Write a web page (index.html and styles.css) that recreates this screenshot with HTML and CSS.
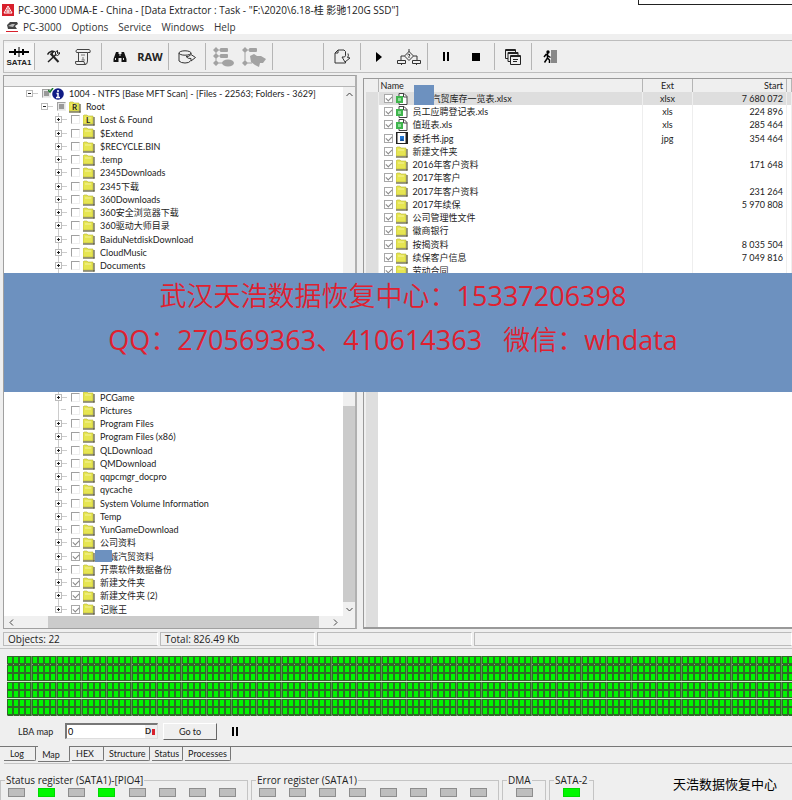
FILE: index.html
```
<!DOCTYPE html>
<html lang="zh-CN">

<head>
    <meta charset="UTF-8">
    <meta name="viewport" content="width=device-width, initial-scale=1.0">
    <title>PC-3000 UDMA-E</title>
    <link rel="stylesheet" href="styles.css">
</head>

<body>
    <!-- 公用图标 -->
    <svg class="defs" width="0" height="0">
        <symbol id="folder" viewBox="0 0 12 12">
            <path d="M0 10V2L1 1H4L5 2H10V10Z" fill="#e6e552" stroke="#b5b23a" stroke-width=".6" />
            <path d="M0 11H11.500M11 3V11.500" fill="none" stroke="#3c3b14" />
            <path d="M2 4H8" stroke="#f4f3a0" />
        </symbol>
        <symbol id="xls" viewBox="0 0 12 12">
            <path d="M3 .5H8L11 3.500V11.500H3Z" fill="#fff" stroke="#444" />
            <path d="M7.500 .5V4H11" fill="none" stroke="#444" />
            <rect x="0" y="3" width="7" height="7" fill="#3fb54d" />
            <path d="M2 5H5V8H2Z" fill="#8fdc98" />
        </symbol>
        <symbol id="jpg" viewBox="0 0 12 12">
            <path d="M0 0H3V12H0ZM9 0H12V12H9Z" fill="#222" />
            <rect x="1" y=".5" width="9" height="11" fill="#fff" stroke="#222" />
            <rect x="4" y="4" width="4" height="5" fill="#2276d2" />
            <path d="M4 9L6 6.500L8 9Z" fill="#104a94" />
        </symbol>
    </svg>

    <header class="titlebar">
        <svg width="12" height="12" viewBox="0 0 12 12">
            <rect width="12" height="12" fill="#d8202c" />
            <path d="M6 2L2 9H10Z M6 4V9 M4 7H8" fill="none" stroke="#fff" />
        </svg>
        <h1>PC-3000 UDMA-E - China - [Data Extractor : Task - "F:\2020\6.18-桂 影驰120G SSD"]</h1>
        <div class="corner"></div>
    </header>
    <nav class="menubar">
        <svg width="13" height="12" viewBox="0 0 13 12">
            <path d="M1 4L4 1H11L12 3L9 5L11 8H2Z" fill="#444" />
            <path d="M2 5L6 3H9L7 6Z" fill="#bbb" />
            <path d="M0 10.500H12" stroke="#d8202c" />
        </svg>
        <a href="#">PC-3000</a>
        <a href="#">Options</a>
        <a href="#">Service</a>
        <a href="#">Windows</a>
        <a href="#">Help</a>
    </nav>

    <div class="toolbar">
        <div class="group first">
            <button class="sata" title="SATA1">
                <svg width="22" height="10" viewBox="0 0 22 10">
                    <path d="M1 5H21" stroke="#000" stroke-width="2" />
                    <path d="M7 2V8M15 2V8" stroke="#000" stroke-width="2" />
                    <path d="M11 0V10" stroke="#000" />
                </svg>
                SATA1
            </button>
        </div>
        <div class="group">
            <button title="Utility">
                <svg width="13" height="13" viewBox="0 0 13 13" fill="none" stroke="#222">
                    <path d="M3.500 3.500L11.500 12" stroke-width="2" />
                    <path d="M.5 4.500L2 2.500L5 1L7 1.500L5 3L5.500 5M9 4.500L1 12" stroke-width="1.500" />
                    <path d="M10.500 .5L8.500 2V4.500L10.500 5.500L12.500 4V2.500L10.500 3.500Z" />
                </svg>
            </button>
            <button title="Log">
                <svg width="18" height="18" viewBox="0 0 18 18" fill="none" stroke="#444">
                    <path d="M3 1.500H15Q17 2 16 4.500H13.500V13Q13.500 16.500 11 16.500H3Q1 16.500 1.500 13.500H10Q10 16.500 12 16.500M4.500 13V4.500H2.500Q1 3 3 1.500M3 4.500H13.500" />
                    <path d="M7 7H11M9 9V12M7.500 12H11" stroke="#777" />
                </svg>
            </button>
        </div>
        <div class="group">
            <button title="Find">
                <svg width="14" height="12" viewBox="0 0 14 12">
                    <path d="M3 1H5.500V3H8.500V1H11L13.500 8V11H8.500V7H5.500V11H.5V8Z" fill="#111" />
                    <path d="M2.500 7V9M10.500 7V9M7 3V5" stroke="#ddd" />
                </svg>
            </button>
            <button class="raw">RAW</button>
        </div>
        <div class="group">
            <button title="Disk">
                <svg width="18" height="14" viewBox="0 0 18 14" fill="none" stroke="#333">
                    <ellipse cx="7" cy="3" rx="6" ry="2.200" />
                    <path d="M1 3V11Q3 13 7 13Q11 13 12.500 11M13 3V4" />
                    <path d="M8 6.500Q11 7 13 4.500L17.500 7.500L13 11V8.500Q10 9 8 6.500Z" fill="#efefef" />
                </svg>
            </button>
        </div>
        <div class="group">
            <button title="Map" disabled>
                <svg width="22" height="20" viewBox="0 0 22 20" fill="#a2a2a2">
                    <path d="M3 0L6 3L3 6L0 3ZM3 6L6 9L3 12L0 9ZM3 13L6 16L3 19L0 16ZM2.500 3H3.500V17H2.500ZM3 2.500H8V3.500H3ZM3 8.500H8V9.500H3ZM3 15.500H10V16.500H3Z" />
                    <rect x="7" y="1" width="8" height="4" rx="1" />
                    <rect x="7" y="7" width="8" height="4" rx="1" />
                    <ellipse cx="15" cy="16" rx="6" ry="3.500" />
                </svg>
            </button>
            <button title="Map range" disabled>
                <svg width="24" height="20" viewBox="0 0 24 20" fill="#a2a2a2">
                    <path d="M3 0L6 3L3 6L0 3ZM3 13L6 16L3 19L0 16ZM2.500 3H3.500V17H2.500ZM3 2.500H8V3.500H3ZM3 15.500H10V16.500H3Z" />
                    <rect x="7" y="1" width="8" height="4" rx="1" />
                    <path d="M8 9L12 7L15 9L19 9L24 12L21 16H18L17 20L13 18L9 15Z" />
                </svg>
            </button>
        </div>
        <div class="group blank"></div>
        <div class="group">
            <button title="Save">
                <svg width="17" height="15" viewBox="0 0 17 15" fill="none" stroke="#333">
                    <path d="M11.500 5V2.500L10 1H4L1 4V14H11.500V12M1 4H4V1" />
                    <path d="M14 4.500Q15 7 13.500 8.500L16 9L11 13L8 8H10.500Q12 7 11.500 5" fill="#efefef" />
                </svg>
            </button>
        </div>
        <div class="group">
            <button title="Start">
                <svg width="6" height="10" viewBox="0 0 6 10"><path d="M0 0L6 5L0 10Z" /></svg>
            </button>
            <button title="Conditions">
                <svg width="24" height="16" viewBox="0 0 24 16" fill="none" stroke="#333">
                    <path d="M12 0V3M12 2.500L16.500 7L12 11.500L7.500 7ZM7.500 7H4V11M16.500 7H20V11M.5 11.500H8.500V14.500H.5ZM15.500 11.500H23.500V14.500H15.500ZM4.500 14V16M19.500 14V16" />
                    <path d="M10.500 6Q12 4 13 6L12 7.500V9" />
                </svg>
            </button>
        </div>
        <div class="group">
            <button title="Pause"><svg width="6" height="9" viewBox="0 0 6 9"><path d="M0 0H2V9H0ZM4 0H6V9H4Z" /></svg></button>
            <button title="Stop"><svg width="8" height="8" viewBox="0 0 8 8"><path d="M0 0H8V8H0Z" /></svg></button>
        </div>
        <div class="group">
            <button title="Windows">
                <svg width="16" height="16" viewBox="0 0 16 16" fill="#eee" stroke="#222">
                    <path d="M.5 .5H10.500V9.500H.5ZM.5 1.500H10.500" />
                    <path d="M3 3.500H13V12.500H3ZM3 4.500H13" />
                    <path d="M5.500 6.500H15.500V15.500H5.500ZM5.500 7.500H15.500M8 10.500H13M8 12.500H12" />
                </svg>
            </button>
        </div>
        <div class="group last">
            <button title="Exit">
                <svg width="15" height="14" viewBox="0 0 15 14">
                    <path d="M10 0H14V13H10Z" fill="#888" />
                    <path d="M9 0V13" stroke="#222" />
                    <circle cx="5" cy="2" r="1.700" />
                    <path d="M4.500 3V8L1.500 12.500M4.500 8L6.500 10V13M1 7L3 4.500L7.500 7.500" fill="none" stroke="#000" stroke-width="1.500" />
                </svg>
            </button>
        </div>
    </div>

    <main class="workspace">
        <section class="left">
            <div class="band"></div>
            <div class="scrollarea">
                <ul class="tree">
                    <li class="lv0"><button class="exp minus"></button><label><input type="checkbox" class="mixed"><svg class="info" width="16" height="12" viewBox="0 0 16 12"><circle cx="10" cy="6" r="5.800" fill="#101c86" /><path d="M10 2V4M8.500 5.500H10V9M8 9.500H12" fill="none" stroke="#fff" stroke-width="1.500" /><path d="M0 2L2 4L5 0" fill="none" stroke="#1c7c2c" stroke-width="1.500" /></svg>1004 - NTFS [Base MFT Scan] - [Files - 22563; Folders - 3629]</label></li>
                    <li class="lv1"><button class="exp minus"></button><label><input type="checkbox" class="mixed"><span class="badge"><svg class="ico"><use href="#folder" /></svg><b>R</b></span>Root</label></li>
                    <li><button class="exp"></button><label><input type="checkbox"><span class="badge"><svg class="ico"><use href="#folder" /></svg><b>L</b></span>Lost &amp; Found</label></li>
                    <li><button class="exp"></button><label><input type="checkbox"><svg class="ico"><use href="#folder" /></svg>$Extend</label></li>
                    <li><button class="exp"></button><label><input type="checkbox"><svg class="ico"><use href="#folder" /></svg>$RECYCLE.BIN</label></li>
                    <li><button class="exp"></button><label><input type="checkbox"><svg class="ico"><use href="#folder" /></svg>.temp</label></li>
                    <li><button class="exp"></button><label><input type="checkbox"><svg class="ico"><use href="#folder" /></svg>2345Downloads</label></li>
                    <li><button class="exp"></button><label><input type="checkbox"><svg class="ico"><use href="#folder" /></svg>2345<span class="cn">下载</span></label></li>
                    <li><button class="exp"></button><label><input type="checkbox"><svg class="ico"><use href="#folder" /></svg>360Downloads</label></li>
                    <li><button class="exp"></button><label><input type="checkbox"><svg class="ico"><use href="#folder" /></svg>360<span class="cn">安全浏览器下载</span></label></li>
                    <li><button class="exp"></button><label><input type="checkbox"><svg class="ico"><use href="#folder" /></svg>360<span class="cn">驱动大师目录</span></label></li>
                    <li><button class="exp"></button><label><input type="checkbox"><svg class="ico"><use href="#folder" /></svg>BaiduNetdiskDownload</label></li>
                    <li><button class="exp"></button><label><input type="checkbox"><svg class="ico"><use href="#folder" /></svg>CloudMusic</label></li>
                    <li><button class="exp"></button><label><input type="checkbox"><svg class="ico"><use href="#folder" /></svg>Documents</label></li>
                    <li class="gap"></li>
                    <li><button class="exp"></button><label><input type="checkbox"><svg class="ico"><use href="#folder" /></svg>PCGame</label></li>
                    <li><span class="noexp"></span><label><input type="checkbox"><svg class="ico"><use href="#folder" /></svg>Pictures</label></li>
                    <li><button class="exp"></button><label><input type="checkbox"><svg class="ico"><use href="#folder" /></svg>Program Files</label></li>
                    <li><button class="exp"></button><label><input type="checkbox"><svg class="ico"><use href="#folder" /></svg>Program Files (x86)</label></li>
                    <li><button class="exp"></button><label><input type="checkbox"><svg class="ico"><use href="#folder" /></svg>QLDownload</label></li>
                    <li><button class="exp"></button><label><input type="checkbox"><svg class="ico"><use href="#folder" /></svg>QMDownload</label></li>
                    <li><button class="exp"></button><label><input type="checkbox"><svg class="ico"><use href="#folder" /></svg>qqpcmgr_docpro</label></li>
                    <li><button class="exp"></button><label><input type="checkbox"><svg class="ico"><use href="#folder" /></svg>qycache</label></li>
                    <li><button class="exp"></button><label><input type="checkbox"><svg class="ico"><use href="#folder" /></svg>System Volume Information</label></li>
                    <li><button class="exp"></button><label><input type="checkbox"><svg class="ico"><use href="#folder" /></svg>Temp</label></li>
                    <li><button class="exp"></button><label><input type="checkbox"><svg class="ico"><use href="#folder" /></svg>YunGameDownload</label></li>
                    <li><button class="exp"></button><label><input type="checkbox" checked><svg class="ico"><use href="#folder" /></svg><span class="cn">公司资料</span></label></li>
                    <li><button class="exp"></button><label><input type="checkbox" checked><svg class="ico"><use href="#folder" /></svg><span class="mask"></span><span class="cn">诚汽贸资料</span></label></li>
                    <li><button class="exp"></button><label><input type="checkbox"><svg class="ico"><use href="#folder" /></svg><span class="cn">开票软件数据备份</span></label></li>
                    <li><button class="exp"></button><label><input type="checkbox" checked><svg class="ico"><use href="#folder" /></svg><span class="cn">新建文件夹</span></label></li>
                    <li><button class="exp"></button><label><input type="checkbox" checked><svg class="ico"><use href="#folder" /></svg><span class="cn">新建文件夹</span>&nbsp;(2)</label></li>
                    <li><button class="exp"></button><label><input type="checkbox" checked><svg class="ico"><use href="#folder" /></svg><span class="cn">记账王</span></label></li>
                </ul>
                <div class="vscroll">
                    <button title="Up"><svg width="7" height="5" viewBox="0 0 7 5"><path d="M.5 4L3.500 1L6.500 4" /></svg></button>
                    <div class="thumb"></div>
                    <button title="Down"><svg width="7" height="5" viewBox="0 0 7 5"><path d="M.5 1L3.500 4L6.500 1" /></svg></button>
                </div>
            </div>
            <div class="hscroll">
                <button title="Left"><svg width="5" height="7" viewBox="0 0 5 7"><path d="M4 .5L1 3.500L4 6.500" /></svg></button>
                <div class="thumb"></div>
                <button title="Right"><svg width="5" height="7" viewBox="0 0 5 7"><path d="M1 .5L4 3.500L1 6.500" /></svg></button>
            </div>
        </section>

        <section class="right">
            <table class="files">
                <colgroup>
                    <col class="c-mark">
                    <col>
                    <col class="c-ext">
                    <col class="c-start">
                    <col class="c-rest">
                </colgroup>
                <thead>
                    <tr><th></th><th class="name">Name</th><th>Ext</th><th class="num">Start</th><th></th></tr>
                </thead>
                <tbody>
                    <tr class="current"><td></td><td><label><input type="checkbox" checked><svg class="ico"><use href="#xls" /></svg><span class="mask"></span><span class="cn">汽贸库存一览表</span>.xlsx</label></td><td>xlsx</td><td>7 680 072</td><td></td></tr>
                    <tr><td></td><td><label><input type="checkbox" checked><svg class="ico"><use href="#xls" /></svg><span class="cn">员工应聘登记表</span>.xls</label></td><td>xls</td><td>224 896</td><td></td></tr>
                    <tr><td></td><td><label><input type="checkbox" checked><svg class="ico"><use href="#xls" /></svg><span class="cn">值班表</span>.xls</label></td><td>xls</td><td>285 464</td><td></td></tr>
                    <tr><td></td><td><label><input type="checkbox" checked><svg class="ico"><use href="#jpg" /></svg><span class="cn">委托书</span>.jpg</label></td><td>jpg</td><td>354 464</td><td></td></tr>
                    <tr><td></td><td><label><input type="checkbox" checked><svg class="ico"><use href="#folder" /></svg><span class="cn">新建文件夹</span></label></td><td></td><td></td><td></td></tr>
                    <tr><td></td><td><label><input type="checkbox" checked><svg class="ico"><use href="#folder" /></svg>2016<span class="cn">年客户资料</span></label></td><td></td><td>171 648</td><td></td></tr>
                    <tr><td></td><td><label><input type="checkbox" checked><svg class="ico"><use href="#folder" /></svg>2017<span class="cn">年客户</span></label></td><td></td><td></td><td></td></tr>
                    <tr><td></td><td><label><input type="checkbox" checked><svg class="ico"><use href="#folder" /></svg>2017<span class="cn">年客户资料</span></label></td><td></td><td>231 264</td><td></td></tr>
                    <tr><td></td><td><label><input type="checkbox" checked><svg class="ico"><use href="#folder" /></svg>2017<span class="cn">年续保</span></label></td><td></td><td>5 970 808</td><td></td></tr>
                    <tr><td></td><td><label><input type="checkbox" checked><svg class="ico"><use href="#folder" /></svg><span class="cn">公司管理性文件</span></label></td><td></td><td></td><td></td></tr>
                    <tr><td></td><td><label><input type="checkbox" checked><svg class="ico"><use href="#folder" /></svg><span class="cn">徽商银行</span></label></td><td></td><td></td><td></td></tr>
                    <tr><td></td><td><label><input type="checkbox" checked><svg class="ico"><use href="#folder" /></svg><span class="cn">按揭资料</span></label></td><td></td><td>8 035 504</td><td></td></tr>
                    <tr><td></td><td><label><input type="checkbox" checked><svg class="ico"><use href="#folder" /></svg><span class="cn">续保客户信息</span></label></td><td></td><td>7 049 816</td><td></td></tr>
                    <tr><td></td><td><label><input type="checkbox" checked><svg class="ico"><use href="#folder" /></svg><span class="cn">劳动合同</span></label></td><td></td><td></td><td></td></tr>
                </tbody>
            </table>
            <div class="empty"></div>
        </section>

        <div class="banner">
            <p><span class="light">武汉天浩数据恢复中心：</span>15337206398</p>
            <p>QQ<span class="light">：</span>270569363<span class="light">、</span>410614363 &nbsp; <span class="light">微信：</span>whdata</p>
        </div>
    </main>

    <div class="statusbar">
        <span>Objects: 22</span>
        <span>Total: 826.49 Kb</span>
        <span></span>
        <span></span>
    </div>

    <section class="mappanel">
        <!-- LBA 扇区图 -->
        <svg class="map" width="100%" height="60">
            <defs>
                <pattern id="cells" width="25" height="17" patternUnits="userSpaceOnUse">
                    <rect width="25" height="17" fill="#2f6a28" />
                    <path d="M1 1H5V7H1ZM7 1H11V7H7ZM13 1H17V7H13ZM19 1H23V7H19ZM1 10H5V16H1ZM7 10H11V16H7ZM13 10H17V16H13ZM19 10H23V16H19Z" fill="#00f400" />
                    <path d="M0 8.500H25" stroke="#8a9a80" stroke-dasharray="1 5" />
                    <path d="M24.500 0V17" stroke="#5f8f58" />
                </pattern>
            </defs>
            <rect width="100%" height="60" fill="url(#cells)" />
            <path d="M0 25.500H2000M0 42.500H2000" stroke="#d5ead2" />
        </svg>
        <div class="lba">
            <label for="lba">LBA map</label>
            <div class="field">
                <input id="lba" type="text" value="0">
                <button title="Dec"><b>D</b><i></i></button>
            </div>
            <button class="goto">Go to</button>
            <button class="pause" title="Pause"><svg width="6" height="9" viewBox="0 0 6 9"><path d="M0 0H2V9H0ZM4 0H6V9H4Z" /></svg></button>
        </div>
    </section>

    <div class="tabs">
        <button>Log</button>
        <button class="active">Map</button>
        <button>HEX</button>
        <button>Structure</button>
        <button>Status</button>
        <button>Processes</button>
    </div>

    <footer class="registers">
        <fieldset class="eight">
            <legend>Status register (SATA1)-[PIO4]</legend>
            <i></i><i class="on"></i><i></i><i class="on"></i><i></i><i></i><i></i><i></i>
        </fieldset>
        <fieldset class="eight">
            <legend>Error register (SATA1)</legend>
            <i></i><i></i><i></i><i></i><i></i><i></i><i></i><i></i>
        </fieldset>
        <fieldset class="one">
            <legend>DMA</legend>
            <i></i>
        </fieldset>
        <fieldset class="one">
            <legend>SATA-2</legend>
            <i class="on"></i>
        </fieldset>
        <p class="sign">天浩数据恢复中心</p>
    </footer>
</body>

</html>
```
FILE: styles.css
```
* {
    box-sizing: border-box;
}

body {
    margin: 0;
    min-height: 100vh;
    overflow: hidden;
    background: #efefef;
    color: #222;
    font: 9px/13px Lato, "Liberation Sans", "Noto Sans CJK SC", sans-serif;
}

button {
    padding: 0;
    border: 0;
    background: none;
    color: inherit;
    font: inherit;
}

.defs {
    position: absolute;
}

/* 标题和菜单 */
.titlebar {
    display: flex;
    align-items: center;
    gap: 4px;
    height: 20px;
    padding-left: 2px;
    background: #fff;
}

.titlebar h1 {
    margin: 0;
    font: 10px/20px "Open Sans", "Noto Sans CJK SC", sans-serif;
    white-space: nowrap;
}

.corner {
    align-self: flex-start;
    width: 154px;
    height: 5px;
    margin-left: auto;
    border-left: 1px solid #222;
    border-bottom: 1px solid #222;
}

.menubar {
    display: flex;
    align-items: center;
    gap: 10px;
    height: 14px;
    padding-left: 6px;
    background: #fff;
    font: 10px/14px "Open Sans", sans-serif;
}

.menubar svg {
    margin-right: -6px;
}

.menubar a {
    color: #333;
    text-decoration: none;
}

/* 工具栏 */
.toolbar {
    display: flex;
    height: 33px;
    margin: 6px 0 0 3px;
    border: solid #bdbdbd;
    border-width: 1px 0 1px 1px;
}

.group {
    display: flex;
    margin: 2px 0;
    padding: 0 3px;
    border-right: 1px solid #b5b5b5;
}

.group button {
    display: flex;
    align-items: center;
    justify-content: center;
    width: 30px;
}

.first {
    padding: 0;
    background: #f6f6f6;
}

.blank {
    width: 51px;
}

.last {
    border: 0;
}

.group .sata {
    flex-direction: column;
    gap: 2px;
    font: bold 8px/8px "Liberation Sans", sans-serif;
}

.group .raw {
    font: bold 11px/14px "Open Sans", sans-serif;
}

/* 中间区域 */
.workspace {
    position: relative;
    display: flex;
    gap: 6px;
    padding: 2px 0 0 3px;
}

.left {
    flex: none;
    width: 354px;
    border: 1px solid #a0a0a0;
    border-right: 2px solid #b0b0b0;
    background: #fff;
}

.band {
    height: 11px;
    background: #efefef;
    border-bottom: 1px solid #b5b5b5;
}

.scrollarea {
    display: flex;
}

.tree {
    flex: 1;
    margin: 0;
    padding: 0;
    list-style: none;
    white-space: nowrap;
    background: linear-gradient(#ccc, #ccc) 54px 26px / 1px 496px no-repeat;
}

.tree li {
    display: flex;
    align-items: center;
    height: 13px;
    padding-left: 51px;
}

.tree li:nth-child(4n) {
    height: 14px;
}

.tree .lv0 {
    padding-left: 22px;
}

.tree .lv1 {
    padding-left: 37px;
}

.tree .gap {
    height: 118px;
}

.tree label,
.files label {
    display: flex;
    align-items: center;
    height: 13px;
}

.exp,
.noexp {
    position: relative;
    width: 7px;
    height: 7px;
    margin-right: 9px;
}

.exp {
    border: 1px solid #bbb;
    background: linear-gradient(#222, #222) center / 3px 1px no-repeat, linear-gradient(#222, #222) center / 1px 3px no-repeat, #fff;
}

.minus {
    background: linear-gradient(#222, #222) center / 3px 1px no-repeat, #fff;
}

.exp::after,
.noexp::after {
    content: "";
    position: absolute;
    top: 2px;
    left: 6px;
    width: 5px;
    border-top: 1px solid #ccc;
}

input[type=checkbox] {
    appearance: none;
    width: 9px;
    height: 9px;
    margin: 0 3px 0 0;
    border: 1px solid #eee;
    border-top-color: #a0a0a0;
    border-left-color: #a0a0a0;
    background: #fff;
}

input[type=checkbox]:checked {
    border-color: #a8a8a8;
}

input[type=checkbox]:checked::after {
    content: "";
    display: block;
    width: 5px;
    height: 3px;
    margin: 1px;
    border: solid #888;
    border-width: 0 0 1px 1px;
    transform: rotate(-45deg);
}

input[type=checkbox].mixed {
    background: #999;
    box-shadow: inset 0 0 0 1px #e4e4e4;
}

.tree .lv0 input {
    margin-right: 0;
}

.ico {
    display: block;
    flex: none;
    width: 12px;
    height: 12px;
    margin-right: 5px;
}

.badge {
    position: relative;
}

.badge b {
    position: absolute;
    top: 0;
    left: 3px;
    font-size: 8px;
    line-height: 13px;
}

.info {
    margin: 0 5px 0 -3px;
}

.cn {
    font-family: "Noto Sans CJK SC", sans-serif;
    font-size: 9px;
}

.mask {
    position: relative;
    z-index: 1;
    width: 17px;
    height: 12px;
    margin: 0 -3px 0 -5px;
    background: #6d91bf;
}

.vscroll {
    display: flex;
    flex-direction: column;
    width: 12px;
    background: #f0f0f0;
}

.vscroll button,
.hscroll button {
    display: flex;
    align-items: center;
    justify-content: center;
    height: 14px;
}

.vscroll path,
.hscroll path {
    fill: none;
    stroke: #444;
}

.vscroll .thumb {
    height: 196px;
    margin-top: auto;
    background: #cbcbcb;
}

.hscroll {
    display: flex;
    align-items: center;
    padding-right: 12px;
    background: #f0f0f0;
}

.hscroll button {
    width: 15px;
    height: 12px;
}

.hscroll .thumb {
    width: 271px;
    height: 12px;
    margin: 0 auto 0 29px;
    background: #cbcbcb;
}

.right {
    display: flex;
    flex: 1;
    flex-direction: column;
    margin-top: 3px;
    padding-left: 2px;
    border: solid #999;
    border-width: 1px 0 2px 1px;
}

.files {
    width: 100%;
    border-collapse: collapse;
    table-layout: fixed;
    background: #fff;
}

.c-mark {
    width: 12px;
}

.c-ext {
    width: 50px;
}

.c-start {
    width: 94px;
}

.c-rest {
    width: 5px;
}

.files th {
    height: 13px;
    padding: 0;
    border-right: 1px solid #b5b5b5;
    background: #efefef;
    font-weight: normal;
}

.files .name {
    padding-left: 2px;
    text-align: left;
}

.files .num {
    padding-right: 3px;
    text-align: right;
}

.files td {
    height: 13px;
    padding: 0;
    border-right: 1px solid #eee;
    text-align: center;
    white-space: nowrap;
}

.files tr:nth-child(4n) td {
    height: 14px;
}

.files td:first-child {
    background: #dedede;
}

.files td:nth-child(2) {
    padding-left: 5px;
}

.files td:nth-child(4) {
    padding-right: 3px;
    text-align: right;
}

.files .current td {
    background: #dedede;
}

.files .mask {
    align-self: flex-end;
    width: 20px;
    height: 20px;
    margin: 0 -2px 0 1px;
}

.empty {
    flex: 1;
    border-left: 12px solid #dedede;
    background: #fff;
}

/* 横幅盖在两栏之上 */
.banner {
    position: absolute;
    z-index: 2;
    top: 200px;
    left: 4px;
    right: 0;
    height: 119px;
    padding-right: 10px;
    background: #6d91bf;
    color: #e0202f;
    font: 27px/43px "Open Sans", "Noto Sans CJK SC", sans-serif;
    text-align: center;
    white-space: nowrap;
}

.banner p {
    margin: 0;
}

.light {
    font-family: "Noto Sans CJK SC", sans-serif;
    font-weight: 350;
}

/* 状态栏 */
.statusbar {
    display: flex;
    gap: 2px;
    padding: 3px 0 2px 3px;
    border-bottom: 1px solid #c4c4c4;
    font: 10px/12px "Open Sans", sans-serif;
}

.statusbar span {
    width: 155px;
    height: 14px;
    padding-left: 4px;
    border: 1px solid #bbb;
    border-right-color: #fff;
}

.statusbar span:last-child {
    flex: 1;
}

.mappanel {
    padding: 7px 0 0 7px;
    border-bottom: 1px solid #777;
}

.map {
    display: block;
}

.lba {
    display: flex;
    align-items: center;
    height: 30px;
    padding-left: 11px;
}

.lba label {
    width: 47px;
}

.field {
    display: flex;
    width: 93px;
    height: 16px;
    border: 1px solid #ddd;
    border-top: 2px solid #777;
    border-left: 2px solid #777;
    background: #fff;
}

.field input {
    flex: 1;
    min-width: 0;
    padding: 0 1px;
    border: 0;
    font: inherit;
}

.field button {
    display: flex;
    align-items: center;
    gap: 1px;
    width: 12px;
    background: #efefef;
    font-size: 8px;
}

.field i {
    width: 3px;
    height: 6px;
    background: #d8202c;
}

.goto {
    width: 54px;
    height: 17px;
    margin: 0 15px 0 5px;
    border: 1px solid #fff;
    border-right-color: #666;
    border-bottom-color: #666;
}

.pause {
    display: flex;
}

/* 底部标签 */
.tabs {
    display: flex;
    gap: 2px;
    height: 17px;
    margin-left: 4px;
    border-bottom: 1px solid #c4c4c4;
}

.tabs button {
    height: 14px;
    padding: 0 3px;
    border: solid #777;
    border-width: 0 1px 1px 0;
    border-radius: 0 0 2px 0;
}

.tabs button:nth-child(-n+3) {
    min-width: 32px;
    padding-right: 8px;
}

.tabs .active {
    height: 16px;
    padding-top: 1px;
    margin-top: -1px;
    background: #efefef;
}

.registers {
    display: flex;
    gap: 3px;
    height: 27px;
    margin-top: 10px;
    font: 10px/12px "Open Sans", sans-serif;
}

fieldset {
    display: flex;
    justify-content: space-between;
    min-width: 0;
    height: 32px;
    margin: 0;
    padding: 2px 11px 0 7px;
    border: 1px solid #c4c4c4;
}

.eight {
    width: 248px;
}

.one {
    justify-content: center;
    min-width: 44px;
    padding: 2px 4px 0;
}

legend {
    margin-left: -3px;
    padding: 0 1px;
}

.one legend {
    margin-left: 0;
}

fieldset i {
    flex: none;
    width: 17px;
    height: 9px;
    border: 1px solid #8d8d8d;
    background: #bebebe;
}

fieldset .on {
    border-color: #00d800;
    background: #00f800;
}

.sign {
    margin: 0 15px 0 auto;
    color: #000;
    font: 13px/20px "Noto Sans CJK SC", sans-serif;
}
```
